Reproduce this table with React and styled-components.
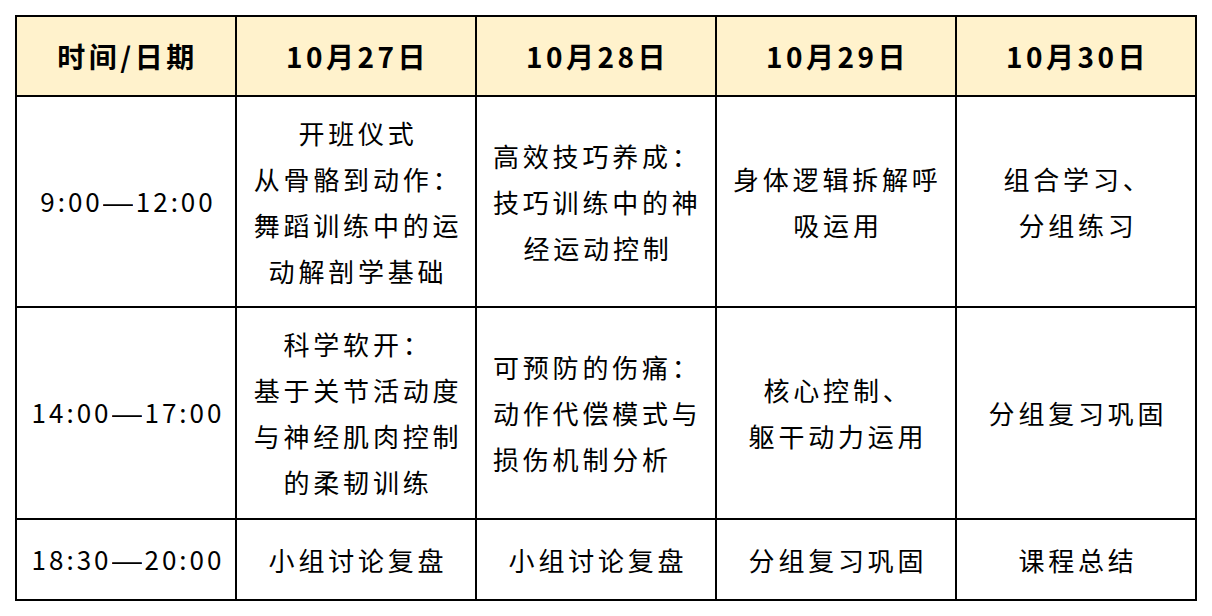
import React from "react";
import styled, { createGlobalStyle } from "styled-components";

const GlobalStyle = createGlobalStyle`
  html, body {
    margin: 0;
    padding: 0;
    background: #ffffff;
  }
  body {
    font-family: "Noto Sans CJK SC", "Noto Sans", sans-serif;
    color: #000000;
  }
`;

const Page = styled.div`
  padding: 15px;
`;

const Table = styled.table`
  border-collapse: collapse;
  table-layout: fixed;
  width: 1182px;
  border: 2px solid #000;
`;

const Col = styled.col`
  width: ${(p) => p.$w}px;
`;

const HeadCell = styled.th`
  height: 78px;
  background: #fff2cc;
  border: 2px solid #000;
  font-size: 28px;
  font-weight: 700;
  letter-spacing: 3.5px;
  text-align: center;
  vertical-align: middle;
  padding: 0 0 0 3px;
`;

const Row = styled.tr`
  height: ${(p) => p.$h}px;
`;

const Cell = styled.td`
  border: 2px solid #000;
  font-size: 26px;
  font-weight: 400;
  letter-spacing: ${(p) => (p.$time ? "3px" : "3.8px")};
  line-height: 46px;
  text-align: center;
  vertical-align: middle;
  padding: 0 0 0 4px;
  white-space: nowrap;
`;

const Dash = styled.span`
  display: inline-block;
  font-family: "Liberation Sans", sans-serif;
  letter-spacing: 0;
  transform: scaleX(1.15);
  margin: 0 5px 0 2px;
`;

const Line = styled.div`
  text-align: ${(p) => (p.$left ? "left" : "center")};
  padding-left: ${(p) => (p.$left ? "12px" : "0")};
`;

const dates = ["10月27日", "10月28日", "10月29日", "10月30日"];

const rows = [
  {
    h: 211,
    time: ["9:00", "12:00"],
    cells: [
      [["开班仪式"], ["从骨骼到动作："], ["舞蹈训练中的运"], ["动解剖学基础"]],
      [["高效技巧养成：", true], ["技巧训练中的神", true], ["经运动控制"]],
      [["身体逻辑拆解呼", true], ["吸运用"]],
      [["组合学习、"], ["分组练习"]],
    ],
  },
  {
    h: 212,
    time: ["14:00", "17:00"],
    cells: [
      [["科学软开："], ["基于关节活动度"], ["与神经肌肉控制"], ["的柔韧训练"]],
      [["可预防的伤痛：", true], ["动作代偿模式与", true], ["损伤机制分析", true]],
      [["核心控制、"], ["躯干动力运用"]],
      [["分组复习巩固"]],
    ],
  },
  {
    h: 81,
    time: ["18:30", "20:00"],
    cells: [[["小组讨论复盘"]], [["小组讨论复盘"]], [["分组复习巩固"]], [["课程总结"]]],
  },
];

export default function App() {
  return (
    <Page>
      <GlobalStyle />
      <Table>
        <colgroup>
          <Col $w={220} />
          <Col $w={240} />
          <Col $w={240} />
          <Col $w={240} />
          <Col $w={240} />
        </colgroup>
        <thead>
          <tr>
            <HeadCell>时间/日期</HeadCell>
            {dates.map((d) => (
              <HeadCell key={d}>{d}</HeadCell>
            ))}
          </tr>
        </thead>
        <tbody>
          {rows.map((r) => (
            <Row key={r.time[0]} $h={r.h}>
              <Cell $time>
                {r.time[0]}
                <Dash>—</Dash>
                {r.time[1]}
              </Cell>
              {r.cells.map((lines, i) => (
                <Cell key={i}>
                  {lines.map(([t, left]) => (
                    <Line key={t} $left={left}>
                      {t}
                    </Line>
                  ))}
                </Cell>
              ))}
            </Row>
          ))}
        </tbody>
      </Table>
    </Page>
  );
}
